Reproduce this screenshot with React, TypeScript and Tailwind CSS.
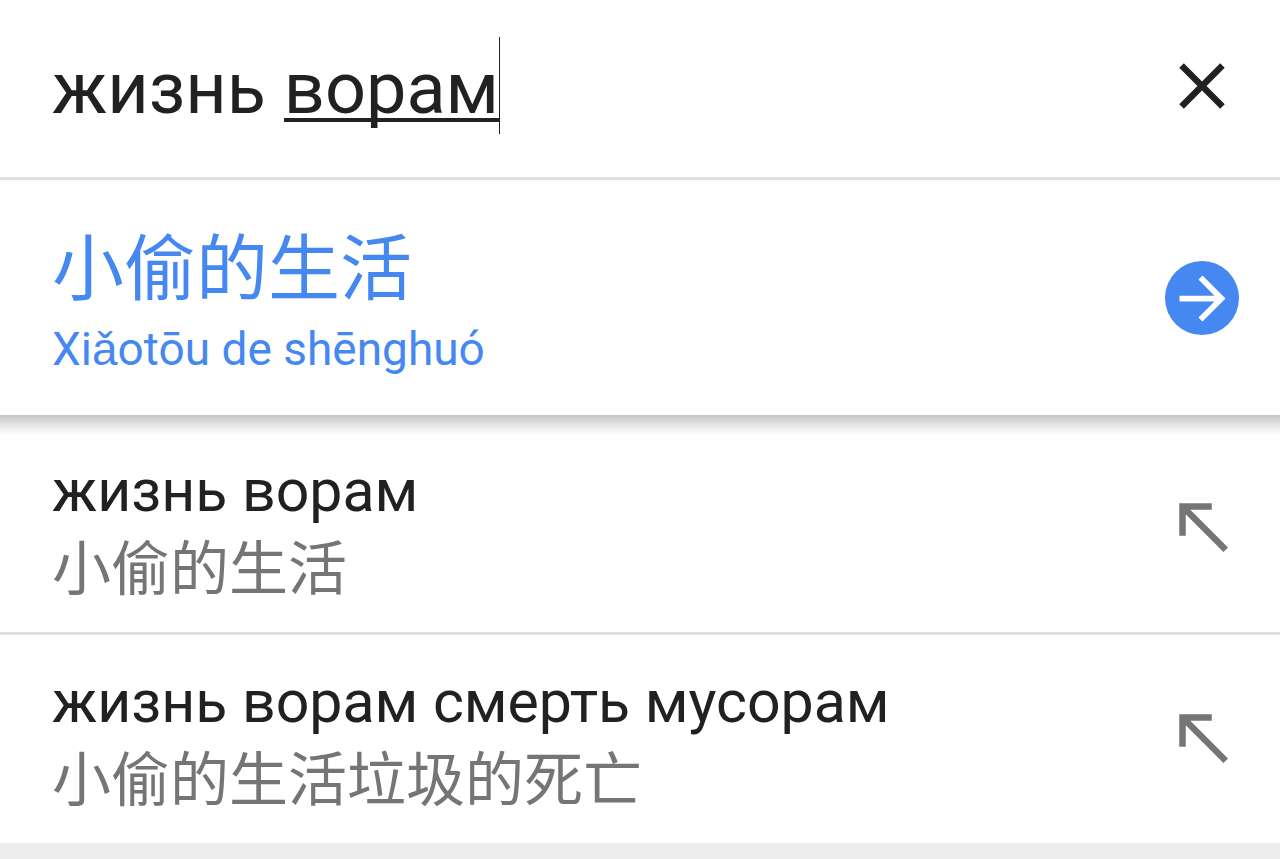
import React, { useState } from 'react';

const suggestions = [
  { source: 'жизнь ворам', translation: '小偷的生活' },
  { source: 'жизнь ворам смерть мусорам', translation: '小偷的生活垃圾的死亡' },
];

function ClearIcon() {
  return (
    <svg viewBox="0 0 24 24" className="size-[78px]" fill="currentColor" aria-hidden="true">
      <path d="M19 6.41L17.59 5 12 10.59 6.41 5 5 6.41 10.59 12 5 17.59 6.41 19 12 13.41 17.59 19 19 17.59 13.41 12z" />
    </svg>
  );
}

function ForwardIcon() {
  return (
    <svg viewBox="0 0 24 24" className="size-[69px]" fill="currentColor" aria-hidden="true">
      <path d="M12 4l-1.41 1.41L16.17 11H4v2h12.17l-5.58 5.59L12 20l8-8z" />
    </svg>
  );
}

function InsertIcon() {
  return (
    <svg viewBox="0 0 24 24" className="size-[78px]" fill="currentColor" aria-hidden="true">
      <path d="M15 5v2H8.41L20 18.59 18.59 20 7 8.41V15H5V5z" />
    </svg>
  );
}

export default function App() {
  const [query, setQuery] = useState('жизнь ворам');

  return (
    <div className="flex min-h-screen flex-col bg-[#ededed] font-['Roboto','Liberation_Sans','Noto_Sans_CJK_SC',sans-serif] text-[#212121]">
      {/* Query */}
      <header className="flex items-center border-b-3 border-[#e0e0e0] bg-white py-10 pr-[39px] pl-[52px]">
        <div className="relative min-w-0 flex-1">
          <input
            type="text"
            lang="ru"
            aria-label="Текст для перевода"
            value={query}
            onChange={(e) => setQuery(e.target.value)}
            className="block h-[97px] w-full bg-transparent text-[72px] leading-[97px] caret-transparent outline-none"
          />
          {/* Composing word underline and cursor */}
          {query === 'жизнь ворам' && (
            <span className="pointer-events-none absolute -top-[3px] left-[232px] h-[97px] w-[216px] border-r border-[#212121]">
              <span className="absolute top-[81px] left-0 h-1 w-full bg-[#212121]" />
            </span>
          )}
        </div>
        <button type="button" aria-label="Очистить" onClick={() => setQuery('')} className="-my-2 pb-1.5">
          <ClearIcon />
        </button>
      </header>

      {/* Instant translation */}
      <section className="relative z-10 flex items-center bg-white pt-[45px] pr-[39px] pb-8 pl-[52px] text-[#4688f1]">
        <div className="min-w-0 flex-1">
          <p lang="zh" className="text-[72px] leading-[90px]">小偷的生活</p>
          <p className="text-[46px] leading-[68px]">Xiǎotōu de shēnghuó</p>
        </div>
        <div className="flex w-[78px] justify-center pb-3">
          <button
            type="button"
            aria-label="Перевести"
            className="flex size-[74px] items-center justify-center rounded-full bg-[#4688f1] text-white"
          >
            <ForwardIcon />
          </button>
        </div>
        <div className="pointer-events-none absolute inset-x-0 top-full h-5 bg-linear-to-b from-[#c3c3c3] via-[#e6e6e6] to-white" />
      </section>

      {/* Suggestions */}
      <ul className="divide-y-3 divide-[#e0e0e0] bg-white pt-[9px]">
        {suggestions.map((item) => (
          <li key={item.source} className="flex items-center pt-8 pr-[39px] pb-[18px] pl-[52px]">
            <div className="min-w-0 flex-1 text-[59px]">
              <p lang="ru" className="leading-[70px]">{item.source}</p>
              <p lang="zh" className="leading-[88px] text-[#757575]">{item.translation}</p>
            </div>
            <button
              type="button"
              aria-label={`Вставить: ${item.source}`}
              onClick={() => setQuery(item.source)}
              className="pb-[18px] text-[#757575]"
            >
              <InsertIcon />
            </button>
          </li>
        ))}
      </ul>
    </div>
  );
}
